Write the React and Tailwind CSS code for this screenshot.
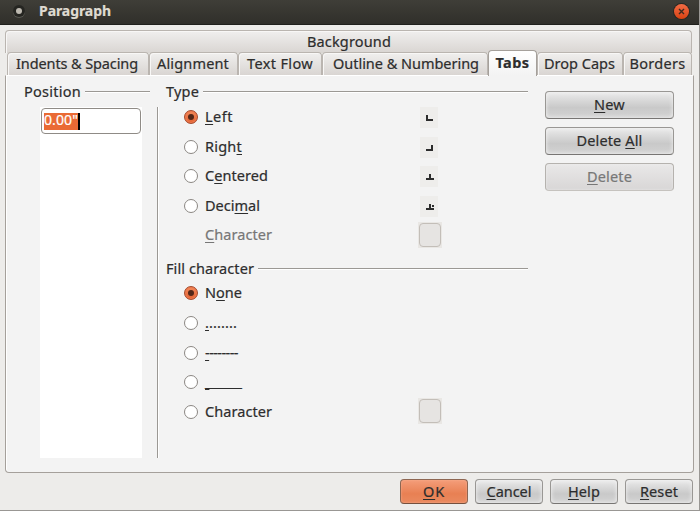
import { useLayoutEffect, useRef, useState } from "react";

// Text fitted to a fixed width by adjusting its tracking; `hot` is the index
// of the underlined mnemonic letter.
function Label({ text, w, hot = -1, className = "" }) {
  const ref = useRef(null);
  const [spacing, setSpacing] = useState(0);
  useLayoutEffect(() => {
    const natural = ref.current.getBoundingClientRect().width;
    setSpacing((w - natural) / text.length);
  }, [text, w]);
  return (
    <span ref={ref} className={`inline-block whitespace-pre pb-[2px] leading-[18px] ${className}`} style={{ letterSpacing: `${spacing}px` }}>
      {hot < 0 ? text : (
        <>
          {text.slice(0, hot)}
          <span className="underline decoration-1 underline-offset-2 [text-decoration-skip-ink:none]">{text[hot]}</span>
          {text.slice(hot + 1)}
        </>
      )}
    </span>
  );
}

function Tab({ text, w, className }) {
  return (
    <div className={`flex h-[23px] justify-center rounded-t border border-b-0 border-[#bab5b0] bg-linear-to-b from-[#f0efee] to-[#d9d5d2] pt-px shadow-[inset_1px_1px_0_#f8f7f6] ${className}`}>
      <Label text={text} w={w} />
    </div>
  );
}

function Group({ text, w, className = "" }) {
  return (
    <div className={`flex h-5 items-center ${className}`}>
      <Label text={text} w={w} />
      <div className="ml-1 mb-px h-0.5 flex-1 border-t border-[#9b9894] bg-white" />
    </div>
  );
}

function Radio({ checked }) {
  return checked ? (
    <span className="mb-px flex size-[14px] shrink-0 items-center justify-center rounded-full border border-[#a4482a] bg-linear-to-b from-[#f28a5c] to-[#e2602f] shadow-[inset_0_0_0_1px_#ef7a4e]">
      <span className="size-[6px] rounded-full bg-[#532718]" />
    </span>
  ) : (
    <span className="mb-px size-[14px] shrink-0 rounded-full border border-[#8b8783] bg-white" />
  );
}

function Option({ checked, text, w, hot, h = "h-[30px]", children }) {
  return (
    <div className={`flex items-start ${h}`}>
      <div className="flex h-[21px] flex-1 items-center">
        <Radio checked={checked} />
        <div className="mb-px ml-[7px] flex h-5"><Label text={text} w={w} hot={hot} /></div>
      </div>
      {children}
    </div>
  );
}

function TabGlyph({ d }) {
  return (
    <div className="mr-[90px] h-[21px] w-[18px] bg-[#eeedeb]">
      <svg width="18" height="21" viewBox="0 0 18 21" shapeRendering="crispEdges">
        <path d={d} fill="#2c2c2c" />
      </svg>
    </div>
  );
}

function CharBox({ className = "" }) {
  return (
    <div className={`h-[26px] w-6 bg-[#e9e7e4] p-px ${className}`}>
      <div className="h-6 w-[22px] rounded border border-[#c3beb8] bg-[#e6e4e2]" />
    </div>
  );
}

const tones = {
  plain: "border-[#999794] border-b-[#777573] bg-linear-to-b from-[#ebebeb] from-0% via-[#c9c9c9] via-60% to-[#d3d3d3] shadow-[inset_0_0_4px_#f4f4f4]",
  off: "border-[#b5b2ae] border-b-[#c5c2be] bg-linear-to-b from-[#e9e8e8] to-[#d8d6d6] text-[#777] shadow-[inset_0_0_2px_#eeeeee]",
  ok: "border-[#8d6652] border-b-[#75503e] bg-linear-to-b from-[#f49d79] from-0% via-[#e88053] via-60% to-[#ea8a60] shadow-[inset_0_0_2px_#f7b395]",
};

function Button({ text, w, hot = 0, tone = "plain", className }) {
  return (
    <button className={`flex items-center justify-center rounded border ${tones[tone]} ${className}`}>
      <Label text={text} w={w} hot={hot} />
    </button>
  );
}

export default function App() {
  return (
    <div className="flex h-[511px] w-[700px] flex-col overflow-hidden border-r border-b border-[#999794] bg-[#edecea] font-['Noto_Sans','Open_Sans',sans-serif] text-[14.5px] text-[#2d2d2d] [-webkit-text-stroke:0.2px]">
      <header className="-mr-px flex h-[25px] shrink-0 items-center border-b border-[#20201c] bg-linear-to-b from-[#3f3e38] to-[#302f2a] pr-[11px] pl-[13px] text-[#dfdbd2]">
        <span className="mt-[-3px] flex size-3 items-center justify-center rounded-full bg-[#252521] shadow-[0_1px_0_#5b5a54]">
          <span className="size-[6px] rounded-full bg-[#bdb9b0]" />
        </span>
        <span className="mt-[-1px] ml-[14px] flex flex-1"><Label text="Paragraph" w={72} className="font-bold text-[14px]" /></span>
        <span className="mt-[-2px] flex size-[15px] items-center justify-center rounded-full bg-linear-to-b from-[#f36b43] to-[#d8420e] shadow-[0_0_0_1px_#292722]">
          <svg width="7" height="7" viewBox="0 0 7 7"><path d="M1 1 6 6M6 1 1 6" stroke="#3b2a20" strokeWidth="1.4" /></svg>
        </span>
      </header>

      <main className="mt-[5px] ml-[5px] flex w-[689px] flex-col">
        <Tab text="Background" w={84} className="w-[687px] pl-px" />
        <div className="mt-[-1px] ml-[2px] flex h-[23px] items-end">
          <Tab text="Indents & Spacing" w={122} className="w-[142px] pr-[2px]" />
          <Tab text="Alignment" w={72} className="w-[89px] pr-px" />
          <Tab text="Text Flow" w={66} className="w-[84px]" />
          <Tab text="Outline & Numbering" w={146} className="w-[166px] pl-[2px]" />
          <div className="z-10 mb-[-1px] flex h-[26px] w-[49px] justify-center rounded-t border border-b-0 border-[#a5a09b] bg-linear-to-b from-white to-[#f3f3f3] pt-[2px]">
            <Label text="Tabs" w={34} className="font-bold" />
          </div>
          <Tab text="Drop Caps" w={71} className="w-[86px] pr-px" />
          <Tab text="Borders" w={56} className="w-[69px]" />
        </div>

        <section className="flex h-[398px] rounded-b border border-t-white border-[#a5a09b] bg-[#f3f3f3] pt-[6px] shadow-[inset_1px_0_0_white]">
          <div className="ml-[18px] w-[126px]">
            <Group text="Position" w={57} />
            <div className="mt-[5px] ml-4 h-[351px] w-[102px] bg-white p-px">
              <div className="flex h-[26px] items-center rounded border border-[#8f8b86] bg-white pl-[2px]">
                <span className="flex h-[17px] items-center border-r-2 border-black bg-[#ea6a34] text-white"><Label text={'0.00"'} w={34} className="pb-0 text-[14px]" /></span>
              </div>
            </div>
          </div>
          <div className="mt-[25px] ml-[7px] h-[351px] w-0.5 border-l border-[#9b9894] bg-white" />
          <div className="ml-[7px] w-[362px]">
            <Group text="Type" w={33} />
            <div className="mt-[5px] pl-[18px]">
              <Option checked text="Left" w={28} hot={0}><TabGlyph d="M6 8h2v4h5v2H6z" /></Option>
              <Option text="Right" w={37} hot={4} h="h-[29px]"><TabGlyph d="M11 8h2v6H6v-2h5z" /></Option>
              <Option text="Centered" w={63} hot={1}><TabGlyph d="M9 8h2v4h3v2H6v-2h3z" /></Option>
              <Option text="Decimal" w={55} hot={4} h="h-[26px]"><TabGlyph d="M9 8h2v4h3v2H6v-2h3zM12 9h2v2h-2z" /></Option>
              <div className="flex h-[26px] items-center pl-[21px]">
                <div className="flex h-5 flex-1 text-[#777]"><Label text="Character" w={67} hot={0} /></div>
                <CharBox className="mr-[86px]" />
              </div>
            </div>
            <Group text="Fill character" w={88} className="mt-[11px]" />
            <div className="mt-1 pl-[18px]">
              <Option checked text="None" w={37} hot={1} />
              <Option text="........" w={32} hot={0} />
              <Option text="--------" w={33} hot={0} h="h-[29px]" />
              <Option text="________" w={35} hot={0} />
              <Option text="Character" w={67}><CharBox className="mt-[-4px] mr-[86px]" /></Option>
            </div>
          </div>
          <div className="mt-[9px] ml-[17px] flex w-[129px] flex-col gap-2">
            <Button text="New" w={31} className="h-7" />
            <Button text="Delete All" w={66} hot={7} className="h-7" />
            <Button text="Delete" w={45} tone="off" className="h-7" />
          </div>
        </section>
      </main>

      <footer className="mt-[6px] mr-[6px] flex justify-end gap-[7px]">
        <Button text="OK" w={22} tone="ok" className="h-[25px] w-[68px]" />
        <Button text="Cancel" w={45} className="h-[25px] w-[68px]" />
        <Button text="Help" w={32} className="h-[25px] w-[68px]" />
        <Button text="Reset" w={38} className="h-[25px] w-[68px]" />
      </footer>
    </div>
  );
}
